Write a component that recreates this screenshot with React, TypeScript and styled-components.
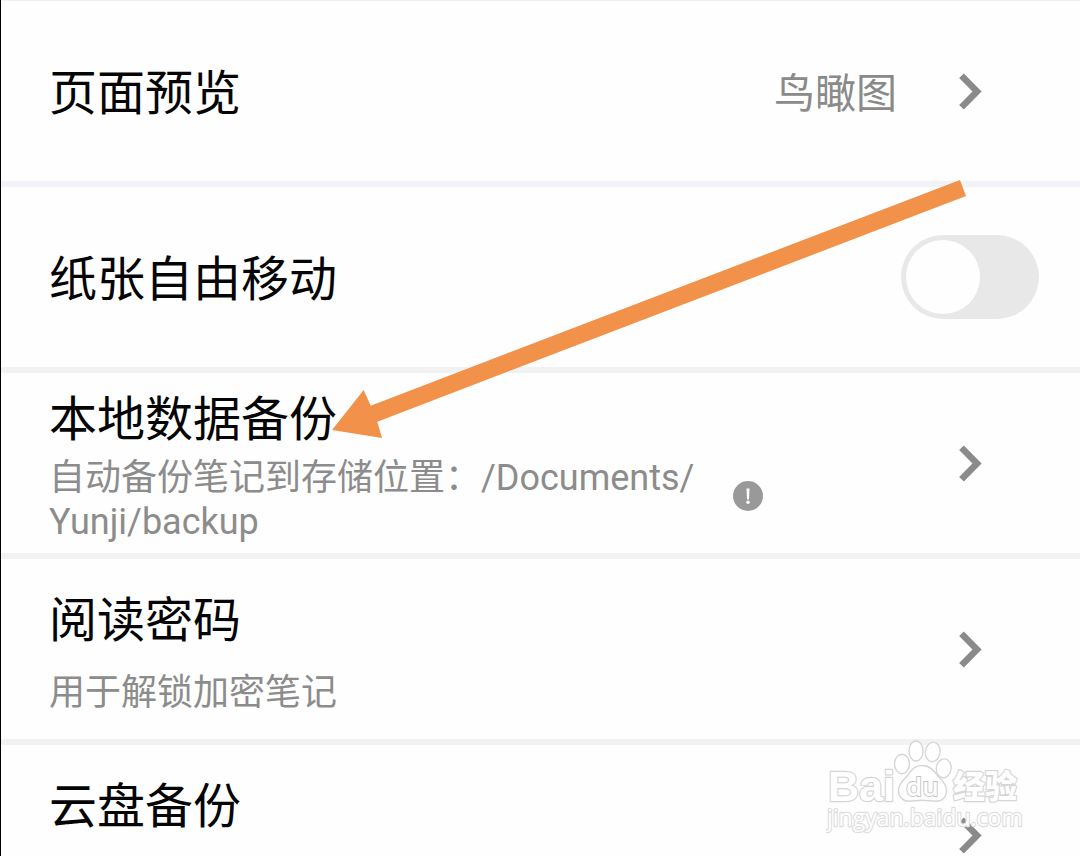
import React from "react";
import styled, { createGlobalStyle } from "styled-components";

const GlobalStyle = createGlobalStyle`
  * { box-sizing: border-box; }
  body {
    margin: 0;
    background: #fefefe;
    font-family: Roboto, "Noto Sans CJK SC", sans-serif;
  }
`;

const Screen = styled.main`
  position: relative;
  height: 100vh;
  overflow: hidden;
  border-left: 1px solid #000;
  background: #fefefe;
`;

const List = styled.ul`
  margin: 0;
  padding: 0;
  list-style: none;
  border-top: 1px solid #f1f1f3;
`;

const Row = styled.li<{ $divider?: string; $end?: number }>`
  display: flex;
  align-items: center;
  height: 186px;
  padding: 0 ${(p) => p.$end ?? 97}px 0 48px;
  border-bottom: 6px solid ${(p) => p.$divider ?? "#f2f2f2"};
`;

const Label = styled.div<{ $top: number }>`
  align-self: flex-start;
  padding-top: ${(p) => p.$top}px;
  white-space: nowrap;
`;

const Title = styled.div`
  font-size: 48px;
  line-height: 56px;
  color: #050505;
`;

const Note = styled.div<{ $gap: number }>`
  margin-top: ${(p) => p.$gap}px;
  font-size: 36px;
  line-height: 44px;
  color: #8c8c8c;
`;

const Line = styled.span`
  display: block;
`;

const Value = styled.span`
  margin: 6px 62px 0 auto;
  font-size: 41px;
  line-height: 56px;
  color: #8a8a8a;
`;

const IconButton = styled.button`
  display: block;
  padding: 0;
  border: 0;
  background: none;
  cursor: pointer;
  svg { display: block; }
`;

const NextButton = styled(IconButton)<{ $push?: boolean }>`
  margin-left: ${(p) => (p.$push ? "auto" : "0")};
`;

const InfoButton = styled(IconButton)`
  align-self: flex-end;
  margin: 0 0 42px 39px;
`;

const Switch = styled.input`
  appearance: none;
  width: 138px;
  height: 84px;
  margin: 0 0 0 auto;
  padding: 5px;
  border-radius: 42px;
  background: #e8e8e8;
  cursor: pointer;
  &::before {
    content: "";
    display: block;
    width: 74px;
    height: 74px;
    border-radius: 50%;
    background: #fefefe;
  }
  &:checked::before { margin-left: auto; }
`;

const Arrow = styled.svg`
  position: absolute;
  left: 329px;
  top: 178px;
  pointer-events: none;
`;

const Watermark = styled.svg`
  position: absolute;
  right: 54px;
  top: 736px;
  pointer-events: none;
`;

function Next({ label, push }: { label: string; push?: boolean }) {
  return (
    <NextButton type="button" aria-label={label} $push={push}>
      <svg width="24" height="40" viewBox="0 0 24 40" fill="none" stroke="#8a8a8a" strokeWidth="6.6">
        <path d="M2.500 4.800 18 20.500 2.500 36.200" />
      </svg>
    </NextButton>
  );
}

export default function App() {
  return (
    <Screen>
      <GlobalStyle />
      <List>
        <Row $divider="#f2f2f7">
          <Label $top={65}><Title>页面预览</Title></Label>
          <Value>鸟瞰图</Value>
          <Next label="页面预览" />
        </Row>
        <Row $end={41}>
          <Label $top={65}><Title as="label" htmlFor="free-move">纸张自由移动</Title></Label>
          <Switch id="free-move" type="checkbox" role="switch" />
        </Row>
        <Row>
          <Label $top={19}>
            <Title>本地数据备份</Title>
            <Note $gap={8}>
              <Line>自动备份笔记到存储位置：/Documents/</Line>
              <Line>Yunji/backup</Line>
            </Note>
          </Label>
          <InfoButton type="button" aria-label="备份说明">
            <svg width="30" height="30" viewBox="0 0 30 30">
              <circle cx="15" cy="15" r="15" fill="#999" />
              <path d="M13.500 7.500h3l-.5 11h-2z" fill="#fff" />
              <circle cx="15" cy="21.300" r="1.700" fill="#fff" />
            </svg>
          </InfoButton>
          <Next label="本地数据备份" push />
        </Row>
        <Row>
          <Label $top={34}>
            <Title>阅读密码</Title>
            <Note $gap={22}>用于解锁加密笔记</Note>
          </Label>
          <Next label="阅读密码" push />
        </Row>
        <Row>
          <Label $top={34}><Title>云盘备份</Title></Label>
          <Next label="云盘备份" push />
        </Row>
      </List>

      <Arrow width="640" height="264" viewBox="330 178 640 264" aria-hidden="true">
        <path d="M332 430 363.7 390 370.7 405.7 960 180 966 196 377.3 421.7 382 438Z" fill="#f1914a" />
      </Arrow>

      <Watermark width="200" height="102" viewBox="826 736 200 102" aria-hidden="true">
        <g fill="#fff" stroke="#d6d6d6" strokeWidth="2.4" strokeLinejoin="round" paintOrder="stroke">
          <text x="828" y="801" fontFamily="Liberation Sans, sans-serif" fontWeight="700" fontSize="43">Bai</text>
          <text x="953" y="798" fontFamily="Noto Sans CJK SC, sans-serif" fontWeight="900" fontSize="32">经验</text>
        </g>
        <text x="827" y="826" fontFamily="Open Sans, sans-serif" fontSize="23" fill="#fff" stroke="#dedede" strokeWidth="2.400" strokeLinejoin="round" paintOrder="stroke">jingyan.baidu.com</text>
        <g fill="#fff" stroke="#d6d6d6" strokeWidth="1.400">
          <ellipse cx="902" cy="764" rx="7.5" ry="9.7" />
          <ellipse cx="916" cy="751" rx="7" ry="10" />
          <ellipse cx="932.7" cy="752" rx="7.4" ry="9.7" transform="rotate(8 932.7 752)" />
          <ellipse cx="943.7" cy="768.3" rx="7.4" ry="9.5" transform="rotate(8 943.7 768.3)" />
          <path d="M922 765.5C914 765.5 911 771 907.500 775.500C904 780 898.500 783 898.500 790.500C898.500 797 903 801.300 909 801.300C914 801.300 917 800.300 922.500 800.300C928 800.300 931 801.300 936 801.300C942 801.300 946.500 797.500 946.500 790.500C946.500 783 941 780 937.500 775.500C934 771 930 765.500 922 765.500Z" />
        </g>
        <text x="906" y="796" fontFamily="Open Sans, sans-serif" fontWeight="600" fontSize="26" fill="#fff" stroke="#c4c4c4" strokeWidth="1.800" paintOrder="stroke">du</text>
      </Watermark>
    </Screen>
  );
}
